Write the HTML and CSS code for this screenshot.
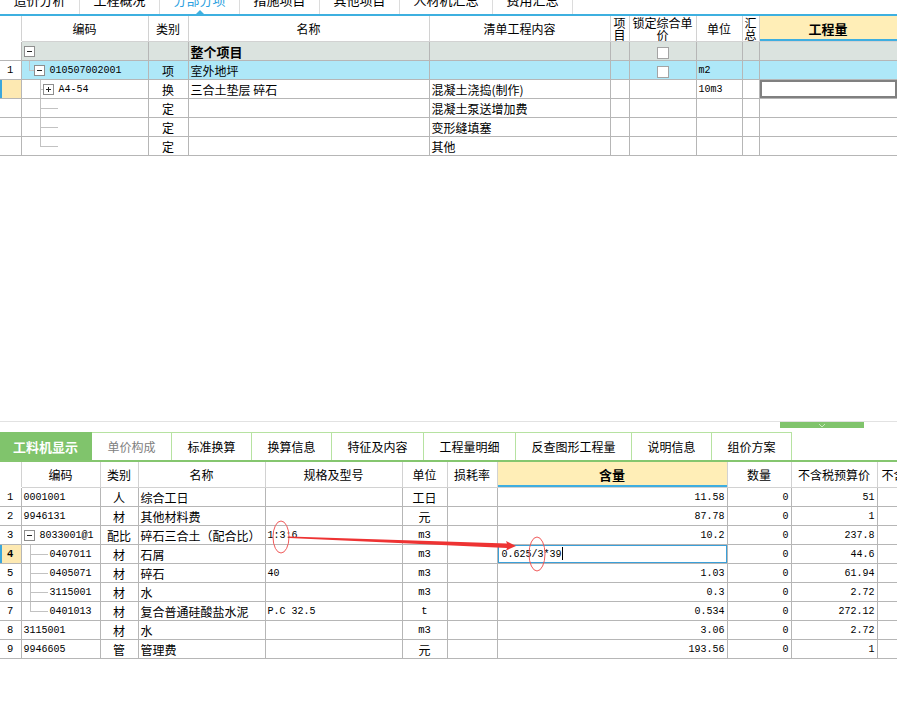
FILE: index.html
```html
<!DOCTYPE html>
<html lang="zh-CN">
<head>
  <meta charset="UTF-8" />
  <title>分部分项</title>
  <link rel="stylesheet" href="styles.css">
</head>
<body>

<!-- top tabs (page scrolled, only the lower half shows) -->
<div class="top-tabs">
  <div class="tab">造价分析</div>
  <div class="tab">工程概况</div>
  <div class="tab on">分部分项</div>
  <div class="tab">措施项目</div>
  <div class="tab">其他项目</div>
  <div class="tab">人材机汇总</div>
  <div class="tab">费用汇总</div>
</div>

<!-- upper grid: 清单 / 定额 -->
<table class="grid top">
  <colgroup>
    <col><col><col><col><col><col><col><col><col><col>
  </colgroup>
  <thead>
    <tr>
      <th class="blank"></th>
      <th>编码</th>
      <th>类别</th>
      <th>名称</th>
      <th>清单工程内容</th>
      <th class="narrow">项目</th>
      <th>锁定综合单价</th>
      <th>单位</th>
      <th class="narrow">汇总</th>
      <th class="hot">工程量</th>
    </tr>
  </thead>
  <tbody>
    <tr class="group">
      <td class="rn"></td>
      <td class="code"><div class="tree"><i class="box minus lead"></i></div></td>
      <td></td>
      <td class="bold">整个项目</td>
      <td></td>
      <td></td>
      <td class="mid"><i class="chk"></i></td>
      <td></td>
      <td></td>
      <td></td>
    </tr>
    <tr class="item">
      <td class="rn n">1</td>
      <td class="code"><div class="tree"><i class="elbow half e1"></i><i class="box minus"></i><span class="n label">010507002001</span></div></td>
      <td class="mid">项</td>
      <td>室外地坪</td>
      <td></td>
      <td></td>
      <td class="mid"><i class="chk"></i></td>
      <td class="n">m2</td>
      <td></td>
      <td></td>
    </tr>
    <tr>
      <td class="rn cur"></td>
      <td class="code"><div class="tree"><i class="elbow full e2"></i><i class="box plus"></i><span class="n label">A4-54</span></div></td>
      <td class="mid">换</td>
      <td>三合土垫层 碎石</td>
      <td>混凝土浇捣(制作)</td>
      <td></td>
      <td></td>
      <td class="n">10m3</td>
      <td></td>
      <td class="picked"></td>
    </tr>
    <tr>
      <td class="rn"></td>
      <td class="code"><div class="tree"><i class="elbow full e3"></i></div></td>
      <td class="mid">定</td>
      <td></td>
      <td>混凝土泵送增加费</td>
      <td></td><td></td><td></td><td></td><td></td>
    </tr>
    <tr>
      <td class="rn"></td>
      <td class="code"><div class="tree"><i class="elbow full e3"></i></div></td>
      <td class="mid">定</td>
      <td></td>
      <td>变形缝填塞</td>
      <td></td><td></td><td></td><td></td><td></td>
    </tr>
    <tr>
      <td class="rn"></td>
      <td class="code"><div class="tree"><i class="elbow half e3"></i></div></td>
      <td class="mid">定</td>
      <td></td>
      <td>其他</td>
      <td></td><td></td><td></td><td></td><td></td>
    </tr>
  </tbody>
</table>

<!-- splitter between the two panes -->
<div class="splitter"></div>
<div class="handle-row">
  <div class="handle">
    <svg width="8" height="5" viewBox="0 0 8 5"><polyline points="1,1 4,4 7,1" fill="none" stroke="#c9e8bd" stroke-width="1"/></svg>
  </div>
</div>

<!-- lower tabs -->
<div class="btabs">
  <div class="btab on">工料机显示</div>
  <div class="btab off">单价构成</div>
  <div class="btab">标准换算</div>
  <div class="btab">换算信息</div>
  <div class="btab">特征及内容</div>
  <div class="btab">工程量明细</div>
  <div class="btab">反查图形工程量</div>
  <div class="btab">说明信息</div>
  <div class="btab">组价方案</div>
</div>

<!-- lower grid: 工料机 -->
<div class="clip">
<table class="grid bottom">
  <colgroup>
    <col><col><col><col><col><col><col><col><col><col><col>
  </colgroup>
  <thead>
    <tr>
      <th class="blank"></th>
      <th>编码</th>
      <th>类别</th>
      <th>名称</th>
      <th>规格及型号</th>
      <th>单位</th>
      <th>损耗率</th>
      <th class="hot">含量</th>
      <th>数量</th>
      <th>不含税预算价</th>
      <th class="cut">不含税市场价</th>
    </tr>
  </thead>
  <tbody>
    <tr>
      <td class="rn n">1</td>
      <td class="n">0001001</td>
      <td class="mid">人</td>
      <td>综合工日</td>
      <td></td>
      <td class="mid">工日</td>
      <td></td>
      <td class="n r">11.58</td>
      <td class="n r">0</td>
      <td class="n r">51</td>
      <td></td>
    </tr>
    <tr>
      <td class="rn n">2</td>
      <td class="n">9946131</td>
      <td class="mid">材</td>
      <td>其他材料费</td>
      <td></td>
      <td class="mid">元</td>
      <td></td>
      <td class="n r">87.78</td>
      <td class="n r">0</td>
      <td class="n r">1</td>
      <td></td>
    </tr>
    <tr>
      <td class="rn n">3</td>
      <td class="code"><div class="tree"><i class="box minus lead"></i><span class="n label">8033001@1</span></div></td>
      <td class="mid">配比</td>
      <td>碎石三合土（配合比）</td>
      <td class="n">1:3:6</td>
      <td class="mid n">m3</td>
      <td></td>
      <td class="n r">10.2</td>
      <td class="n r">0</td>
      <td class="n r">237.8</td>
      <td></td>
    </tr>
    <tr>
      <td class="rn n cur strong">4</td>
      <td class="code"><div class="tree"><i class="elbow full e4"></i><span class="n label">0407011</span></div></td>
      <td class="mid">材</td>
      <td>石屑</td>
      <td></td>
      <td class="mid n">m3</td>
      <td></td>
      <td class="n editing">0.625/3*39<i class="caret"></i></td>
      <td class="n r">0</td>
      <td class="n r">44.6</td>
      <td></td>
    </tr>
    <tr>
      <td class="rn n">5</td>
      <td class="code"><div class="tree"><i class="elbow full e4"></i><span class="n label">0405071</span></div></td>
      <td class="mid">材</td>
      <td>碎石</td>
      <td class="n">40</td>
      <td class="mid n">m3</td>
      <td></td>
      <td class="n r">1.03</td>
      <td class="n r">0</td>
      <td class="n r">61.94</td>
      <td></td>
    </tr>
    <tr>
      <td class="rn n">6</td>
      <td class="code"><div class="tree"><i class="elbow full e4"></i><span class="n label">3115001</span></div></td>
      <td class="mid">材</td>
      <td>水</td>
      <td></td>
      <td class="mid n">m3</td>
      <td></td>
      <td class="n r">0.3</td>
      <td class="n r">0</td>
      <td class="n r">2.72</td>
      <td></td>
    </tr>
    <tr>
      <td class="rn n">7</td>
      <td class="code"><div class="tree"><i class="elbow half e4"></i><span class="n label">0401013</span></div></td>
      <td class="mid">材</td>
      <td>复合普通硅酸盐水泥</td>
      <td class="n">P.C 32.5</td>
      <td class="mid n">t</td>
      <td></td>
      <td class="n r">0.534</td>
      <td class="n r">0</td>
      <td class="n r">272.12</td>
      <td></td>
    </tr>
    <tr>
      <td class="rn n">8</td>
      <td class="n">3115001</td>
      <td class="mid">材</td>
      <td>水</td>
      <td></td>
      <td class="mid n">m3</td>
      <td></td>
      <td class="n r">3.06</td>
      <td class="n r">0</td>
      <td class="n r">2.72</td>
      <td></td>
    </tr>
    <tr>
      <td class="rn n">9</td>
      <td class="n">9946605</td>
      <td class="mid">管</td>
      <td>管理费</td>
      <td></td>
      <td class="mid">元</td>
      <td></td>
      <td class="n r">193.56</td>
      <td class="n r">0</td>
      <td class="n r">1</td>
      <td></td>
    </tr>
  </tbody>
</table>
</div>

<!-- red annotation drawn over the screenshot -->
<svg class="marks" width="897" height="704" viewBox="0 0 897 704">
  <ellipse cx="281" cy="537" rx="8" ry="16" fill="none" stroke="#f05a5a" stroke-width="1"/>
  <ellipse cx="537" cy="554" rx="8" ry="17" fill="none" stroke="#f05a5a" stroke-width="1"/>
  <polygon points="289,536.5 507,543.5 506,541 516,546 506,550.5 507,548 289,538" fill="#ee3333"/>
</svg>

</body>
</html>
```

FILE: styles.css
```css
body {
  margin: 0;
  width: 897px;
  height: 704px;
  overflow: hidden;
  position: relative;
  background: #fff;
  color: #000;
  font-family: "Noto Sans CJK SC", sans-serif;
  font-size: 12px;
}

/* top tab strip */
.top-tabs {
  display: flex;
  height: 28px;
  margin-top: -14px;
  border-bottom: 2px solid #3eb0e0;
}
.top-tabs .tab {
  position: relative;
  padding: 0 13.5px;
  line-height: 28px;
  font-size: 13px;
  border-right: 1px solid #dcdcdc;
}
.top-tabs .tab.on {
  color: #2b9fe0;
}
.top-tabs .tab.on::after {
  content: "";
  position: absolute;
  left: 50%;
  bottom: 0;
  margin-left: -4px;
  border: 4px solid transparent;
  border-top: 0;
  border-bottom-color: #3eb0e0;
}

/* grids */
.grid {
  border-collapse: collapse;
  table-layout: fixed;
}
.grid th {
  height: 25px;
  padding: 0;
  font-weight: normal;
  line-height: 12px;
  border: 1px solid #d2d2d2;
  border-top: 0;
  text-align: center;
}
.grid th.blank {
  border-left: 0;
  border-bottom-color: #fff;
}
.grid th.narrow {
  word-break: break-all;
}
.grid th.hot {
  background: #ffeeb7;
  font-weight: bold;
  font-size: 13px;
  box-shadow: inset 0 -2px #3eaee0;
}
.grid tbody tr {
  height: 19px;
}
.grid td {
  padding: 0 2px;
  line-height: 17px;
  border: 1px solid #b6b6b6;
  white-space: nowrap;
  overflow: hidden;
}
.grid td.rn {
  border-left: 0;
  text-align: center;
  background: #fff;
}
.grid td.cur {
  background: #fde9b2;
  box-shadow: inset 2px 0 #3ba7dc;
}
.grid td.strong {
  font-weight: bold;
}
.grid td.mid {
  text-align: center;
}
.grid td.r {
  text-align: right;
}
.grid td.bold {
  font-weight: bold;
  font-size: 13px;
}

.n {
  font-family: "Liberation Mono", "Noto Sans CJK SC", monospace;
  font-size: 10px;
}
.grid td.mid.n,
.grid td.rn.n {
  font-size: 10.5px;
}

.top col:nth-child(1) { width: 21px; }
.top col:nth-child(2) { width: 127px; }
.top col:nth-child(3) { width: 40px; }
.top col:nth-child(4) { width: 241px; }
.top col:nth-child(5) { width: 181px; }
.top col:nth-child(6) { width: 19px; }
.top col:nth-child(7) { width: 67px; }
.top col:nth-child(8) { width: 46px; }
.top col:nth-child(9) { width: 17px; }
.top col:nth-child(10) { width: 138px; }
.top {
  width: 897px;
}

.top tr.group td {
  background: #dbe3df;
}
.top tr.item td {
  background: #aee8f8;
}
.top tr.group td.rn,
.top tr.item td.rn {
  background: #fff;
}
.top td.picked {
  box-shadow: inset 0 0 0 2px #808080;
}

/* tree column */
.grid td.code {
  padding: 0;
}
.tree {
  display: flex;
  align-items: center;
  height: 18px;
}
.tree .label {
  margin-left: 5px;
}
.elbow {
  display: block;
  flex: none;
  align-self: stretch;
  background:
    linear-gradient(#c2c2c2, #c2c2c2) 0 0 / 1px 100% no-repeat,
    linear-gradient(#c2c2c2, #c2c2c2) 0 9px / 100% 1px no-repeat;
}
.elbow.half {
  background-size: 1px 10px, 100% 1px;
}
.e1 { margin-left: 7px; width: 5px; }
.e2 { margin-left: 18px; width: 3px; }
.e3 { margin-left: 18px; width: 18px; }
.e4 { margin-left: 8px; width: 18px; }
.tree .e4 + .label { margin-left: 2px; }

.box {
  display: block;
  flex: none;
  width: 9px;
  height: 9px;
  border: 1px solid #8e8e8e;
  background: #fff;
}
.box.lead {
  margin-left: 2px;
}
.box.minus {
  background: linear-gradient(#222, #222) center / 5px 1px no-repeat, #fff;
}
.box.plus {
  background:
    linear-gradient(#222, #222) center / 5px 1px no-repeat,
    linear-gradient(#222, #222) center / 1px 5px no-repeat,
    #fff;
}

.chk {
  display: inline-block;
  width: 10px;
  height: 10px;
  border: 1px solid #a4a4a4;
  background: #fff;
  vertical-align: middle;
}

/* splitter */
.splitter {
  height: 1px;
  margin-top: 265px;
  background: #e2e2e2;
}
.handle-row {
  display: flex;
  justify-content: flex-end;
  padding-right: 33px;
}
.handle {
  width: 84px;
  height: 6px;
  background: #80c46c;
  display: flex;
  justify-content: center;
  align-items: flex-end;
}
.handle svg {
  display: block;
}

/* lower tabs */
.btabs {
  display: flex;
  height: 28px;
  margin-top: 4px;
  border-bottom: 2px solid #85c66f;
}
.btab {
  padding: 0 15.5px;
  line-height: 27px;
  border: 1px solid #b6e2a1;
  border-bottom: 0;
  border-left: 0;
}
.btab.on {
  width: 92px;
  padding: 0;
  box-sizing: border-box;
  text-align: center;
  background: #80c46c;
  border-color: #80c46c;
  color: #fff;
  font-weight: bold;
  font-size: 13px;
}
.btab.off {
  color: #808080;
}

.clip {
  width: 897px;
  overflow: hidden;
}
.bottom {
  width: 937px;
}
.bottom col:nth-child(1) { width: 21px; }
.bottom col:nth-child(2) { width: 79px; }
.bottom col:nth-child(3) { width: 38px; }
.bottom col:nth-child(4) { width: 127px; }
.bottom col:nth-child(5) { width: 137px; }
.bottom col:nth-child(6) { width: 45px; }
.bottom col:nth-child(7) { width: 50px; }
.bottom col:nth-child(8) { width: 230px; }
.bottom col:nth-child(9) { width: 64px; }
.bottom col:nth-child(10) { width: 86px; }
.bottom col:nth-child(11) { width: 60px; }
.bottom th {
  height: 25px;
}
.bottom th.cut {
  text-align: left;
  padding-left: 4px;
  white-space: nowrap;
  overflow: hidden;
}
.bottom td.editing {
  padding-left: 4px;
  box-shadow: inset 0 0 0 1px #3a9fd8;
}
.caret {
  display: inline-block;
  width: 1px;
  height: 13px;
  background: #000;
  vertical-align: middle;
}

.marks {
  position: absolute;
  left: 0;
  top: 0;
  pointer-events: none;
}
```
